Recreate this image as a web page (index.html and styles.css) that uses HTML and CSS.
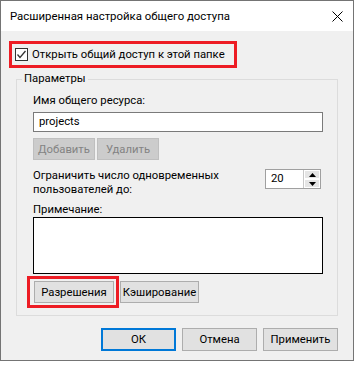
FILE: index.html
```html
<!DOCTYPE html>
<html lang="ru">
<head>
    <meta charset="UTF-8">
    <title>Расширенная настройка общего доступа</title>
    <link rel="stylesheet" href="styles.css">
</head>
<body>

<div class="window">
    <div class="titlebar">
        <span class="title">Расширенная настройка общего доступа</span>
        <svg class="close" width="11" height="11" viewBox="0 0 11 11">
            <path d="M0.5 0.5L10.5 10.5M10.5 0.5L0.5 10.5" stroke="#000" stroke-width="1" fill="none"/>
        </svg>
    </div>

    <div class="content">
        <div class="mark share">
            <span class="checkbox">
                <svg width="11" height="11" viewBox="0 0 11 11">
                    <path d="M1.5 5.5L4 8.5L9.5 2" stroke="#333" stroke-width="1.3" fill="none"/>
                </svg>
            </span>
            <span>Открыть общий доступ к этой папке</span>
        </div>

        <fieldset class="group">
            <legend>Параметры</legend>
            <div class="group-inner">
                <div class="label">Имя общего ресурса:</div>
                <div class="field">projects</div>

                <div class="row">
                    <button class="btn small" disabled>Добавить</button>
                    <button class="btn small" disabled>Удалить</button>
                </div>

                <div class="limit">
                    <div class="limit-text">Ограничить число одновременных<br>пользователей до:</div>
                    <div class="spin">
                        <span class="spin-value">20</span>
                        <span class="spin-buttons">
                            <span class="spin-btn">
                                <svg width="7" height="4" viewBox="0 0 7 4"><path d="M0 4L3.5 0L7 4Z" fill="#000"/></svg>
                            </span>
                            <span class="spin-btn">
                                <svg width="7" height="4" viewBox="0 0 7 4"><path d="M0 0L7 0L3.5 4Z" fill="#000"/></svg>
                            </span>
                        </span>
                    </div>
                </div>

                <div class="label note-label">Примечание:</div>
                <div class="note"></div>

                <div class="row bottom-row">
                    <div class="mark perm">
                        <button class="btn perm-btn">Разрешения</button>
                    </div>
                    <button class="btn cache-btn">Кэширование</button>
                </div>
            </div>
        </fieldset>

        <div class="actions">
            <button class="btn action default">ОК</button>
            <button class="btn action">Отмена</button>
            <button class="btn action">Применить</button>
        </div>
    </div>
</div>

</body>
</html>
```

FILE: styles.css
```css
body {
    margin: 0;
    background: #fff;
    font-family: Roboto, "Noto Sans", sans-serif;
    font-size: 11.3px;
    color: #000;
}
.window {
    width: 354px;
    height: 361px;
    box-sizing: border-box;
    border: 1px solid #747474;
    display: flex;
    flex-direction: column;
}
.titlebar {
    height: 30px;
    background: #fff;
    display: flex;
    align-items: center;
    justify-content: space-between;
    padding: 0 10px 0 9px;
    flex-shrink: 0;
}
.title {
    font-size: 11.4px;
}
.content {
    flex: 1;
    background: #f0f0f0;
    padding: 10px 0 0 8px;
}

/* red annotation frames */
.mark {
    border: 3px solid #ed1c24;
    box-sizing: border-box;
}
.share {
    width: 228px;
    height: 27px;
    display: flex;
    align-items: center;
    padding-left: 3px;
    white-space: nowrap;
}
.checkbox {
    width: 13px;
    height: 13px;
    box-sizing: border-box;
    border: 1px solid #333;
    background: #fff;
    display: flex;
    align-items: center;
    justify-content: center;
    margin-right: 4px;
}

.group {
    margin: 3px 0 0 7px;
    width: 322px;
    box-sizing: border-box;
    padding: 0;
    border: 1px solid #dcdcdc;
}
.group legend {
    margin-left: 5px;
    padding: 0 2px;
    line-height: 16px;
}
.group-inner {
    padding: 6px 14px 7px 16px;
}
.label {
    line-height: 15px;
}
.field {
    margin-top: 4px;
    height: 20px;
    box-sizing: border-box;
    border: 1px solid #7a7a7a;
    background: #fff;
    padding-left: 5px;
    line-height: 18px;
}
.row {
    display: flex;
    align-items: center;
}
.row .small {
    margin-top: 6px;
    width: 62px;
    height: 22px;
    margin-right: 2px;
}
.btn {
    font-family: inherit;
    font-size: 11.3px;
    background: #e1e1e1;
    border: 1px solid #adadad;
    color: #000;
    padding: 0;
    box-sizing: border-box;
    white-space: nowrap;
}
.btn:disabled {
    background: #cccccc;
    border-color: #bfbfbf;
    color: #838383;
}

.limit {
    margin-top: 9px;
    display: flex;
    justify-content: space-between;
    align-items: flex-start;
}
.limit-text {
    line-height: 14px;
}
.spin {
    width: 56px;
    height: 20px;
    box-sizing: border-box;
    border: 1px solid #a0a0a0;
    background: #fff;
    display: flex;
    margin-right: 2px;
}
.spin-value {
    flex: 1;
    padding-left: 5px;
    line-height: 18px;
}
.spin-buttons {
    width: 16px;
    display: flex;
    flex-direction: column;
    border-left: 1px solid #c8c8c8;
}
.spin-btn {
    flex: 1;
    background: #e5e5e5;
    border: 1px solid #fff;
    display: flex;
    align-items: center;
    justify-content: center;
}

.note-label {
    margin-top: 6px;
    line-height: 13px;
}
.note {
    margin-top: 1px;
    height: 57px;
    box-sizing: border-box;
    border: 1px solid #000;
    background: #fff;
}

.bottom-row {
    margin-top: 2px;
}
.perm {
    margin-left: -6px;
    width: 92px;
    height: 32px;
    padding: 2px 2px 2px 4px;
}
.perm-btn {
    width: 80px;
    height: 22px;
}
.cache-btn {
    margin-left: 1px;
    width: 79px;
    height: 22px;
}

.actions {
    margin-top: 12px;
    display: flex;
    justify-content: flex-end;
    gap: 6px;
    padding-right: 15px;
}
.action {
    width: 75px;
    height: 23px;
}
.default {
    border: 2px solid #0078d7;
}
```
